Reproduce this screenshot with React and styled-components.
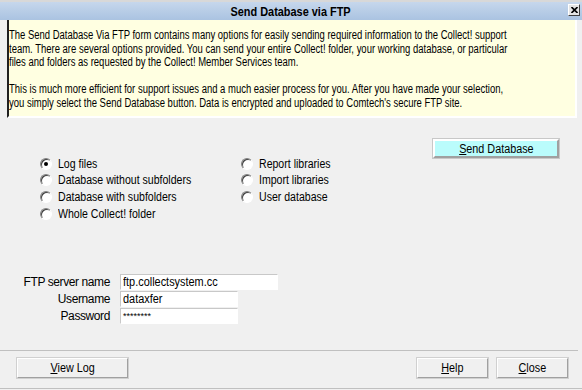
import React from 'react';
import styled, { createGlobalStyle } from 'styled-components';

const Global = createGlobalStyle`
  html, body { margin: 0; padding: 0; background: #f0f0f0; }
  body {
    font-family: "Liberation Sans", Arial, sans-serif;
    font-size: 12px;
    color: #000;
  }
`

const Window = styled.div`
  width: 582px;
  height: 390px;
  background: #f0f0f0;
  border-top: 2px solid #d8d8d8;
  box-sizing: border-box;
  display: flex;
  flex-direction: column;
  overflow: hidden;
`

// the dialog font is a narrow one, so squeeze the Liberation glyphs sideways
const Narrow = styled.span`
  display: inline-block;
  white-space: nowrap;
  transform: scaleX(${p => p.$sx || 0.88});
  transform-origin: ${p => p.$origin || 'left'} center;
`

const TitleBar = styled.div`
  height: 18px;
  background: linear-gradient(#c6d7ec, #aac3e1);
  display: flex;
  align-items: center;
  justify-content: center;
  position: relative;
  font-weight: bold;
  font-size: 13px;
`

const CloseBox = styled.div`
  position: absolute;
  right: 2px;
  top: 2px;
  width: 12px;
  height: 12px;
  box-sizing: border-box;
  background: #e4e4e4;
  border: 1px solid;
  border-color: #fff #404040 #404040 #fff;
  display: flex;
  align-items: center;
  justify-content: center;
`

const Info = styled.div`
  margin: 0 5px 0 7px;
  height: 98px;
  box-sizing: border-box;
  background: #ffffe1;
  border-left: 2px solid #202020;
  border-right: 2px solid #fff;
  border-bottom: 2px solid #fff;
  padding: 9px 0 0 0;
`

const Line = styled.div`
  height: 13.5px;
  line-height: 13.5px;
  white-space: nowrap;
  transform: scaleX(0.79);
  transform-origin: left center;
`

const OptionsArea = styled.div`
  display: flex;
  padding: 21px 0 0 40px;
  height: 156px;
  box-sizing: border-box;
`

const Column = styled.div`
  display: flex;
  flex-direction: column;
  width: ${p => p.$width}px;
  padding-top: 16.5px;
`

const RadioRow = styled.label`
  display: flex;
  align-items: center;
  height: 16.67px;
  gap: 6px;
`

const Circle = styled.span`
  flex: none;
  width: 12px;
  height: 12px;
  border-radius: 50%;
  box-sizing: border-box;
  background: #fff;
  border: 1px solid;
  border-color: #808080 #fff #fff #808080;
  box-shadow: inset 1px 1px 0 #404040;
  display: flex;
  align-items: center;
  justify-content: center;
  &::after {
    content: '';
    width: 4px;
    height: 4px;
    border-radius: 50%;
    background: ${p => (p.$on ? '#000' : 'transparent')};
  }
`

const SendButton = styled.button`
  width: 126px;
  height: 19px;
  box-sizing: border-box;
  background: #bafcfc;
  border: 2px solid;
  border-color: #fff #a0a0a0 #a0a0a0 #fff;
  outline: 1px solid #c8c8c8;
  font: inherit;
  padding: 0;
  cursor: pointer;
`

const Fields = styled.div`
  display: grid;
  grid-template-columns: 110px auto;
  grid-auto-rows: 16px;
  column-gap: 10px;
  row-gap: 1px;
  height: 76px;
  align-content: start;
`

const FieldLabel = styled.span`
  text-align: right;
  align-self: center;
  letter-spacing: -0.4px;
`

const Input = styled.div`
  width: ${p => p.$width}px;
  height: 16px;
  box-sizing: border-box;
  background: #fff;
  border: 1px solid;
  border-color: #c8c8c8 #fff #fff #c8c8c8;
  padding: 0 2px;
  line-height: 14px;
  font-size: ${p => (p.$small ? 9 : 12)}px;
`

const Separator = styled.div`
  border-top: 1px solid #c0c0c0;
  margin-right: 4px;
`

const Footer = styled.div`
  display: flex;
  padding: 7px 14px 0 17px;
  gap: 9px;
`

const Button = styled.button`
  width: ${p => p.$width || 71}px;
  height: 20px;
  box-sizing: border-box;
  background: #f0f0f0;
  border: 1px solid;
  border-color: #fff #a0a0a0 #a0a0a0 #fff;
  outline: 1px solid #d0d0d0;
  font: inherit;
  padding: 0;
  margin-left: ${p => (p.$push ? 'auto' : 0)};
  cursor: pointer;
`

const BottomLine = styled.div`
  margin-top: 10px;
  border-top: 1px solid #c0c0c0;
`

const infoLines = [
  'The Send Database Via FTP form contains many options for easily sending required information to the Collect! support',
  'team. There are several options provided. You can send your entire Collect! folder, your working database, or particular',
  'files and folders as requested by the Collect! Member Services team.',
  '',
  'This is much more efficient for support issues and a much easier process for you. After you have made your selection,',
  "you simply select the Send Database button. Data is encrypted and uploaded to Comtech's secure FTP site.",
]

const leftOptions = ['Log files', 'Database without subfolders', 'Database with subfolders', 'Whole Collect! folder']
const rightOptions = ['Report libraries', 'Import libraries', 'User database']

function Radio({ label, on }) {
  return (
    <RadioRow>
      <Circle $on={on} />
      <Narrow>{label}</Narrow>
    </RadioRow>
  )
}

export default function App() {
  return (
    <>
      <Global />
      <Window>
        <TitleBar>
          <Narrow $sx={0.84} $origin="center">Send Database via FTP</Narrow>
          <CloseBox>
            <svg width="7" height="6" viewBox="0 0 7 6">
              <path d="M0.5 0 L6.5 6 M6.5 0 L0.5 6" stroke="#000" strokeWidth="1.6" />
            </svg>
          </CloseBox>
        </TitleBar>
        <Info>
          {infoLines.map((l, i) => <Line key={i}>{l}</Line>)}
        </Info>
        <OptionsArea>
          <Column $width={201}>
            {leftOptions.map((o, i) => <Radio key={o} label={o} on={i === 0} />)}
          </Column>
          <Column $width={192}>
            {rightOptions.map(o => <Radio key={o} label={o} />)}
          </Column>
          <div>
            <SendButton>
              <Narrow $sx={0.9} $origin="center"><u>S</u>end Database</Narrow>
            </SendButton>
          </div>
        </OptionsArea>
        <Fields>
          <FieldLabel>FTP server name</FieldLabel>
          <Input $width={158}><Narrow $sx={0.91}>ftp.collectsystem.cc</Narrow></Input>
          <FieldLabel>Username</FieldLabel>
          <Input $width={118}><Narrow $sx={0.91}>dataxfer</Narrow></Input>
          <FieldLabel>Password</FieldLabel>
          <Input $width={118} $small>********</Input>
        </Fields>
        <Separator />
        <Footer>
          <Button $width={111}><Narrow $sx={0.9} $origin="center"><u>V</u>iew Log</Narrow></Button>
          <Button $push><Narrow $sx={0.9} $origin="center"><u>H</u>elp</Narrow></Button>
          <Button><Narrow $sx={0.9} $origin="center"><u>C</u>lose</Narrow></Button>
        </Footer>
        <BottomLine />
      </Window>
    </>
  )
}
